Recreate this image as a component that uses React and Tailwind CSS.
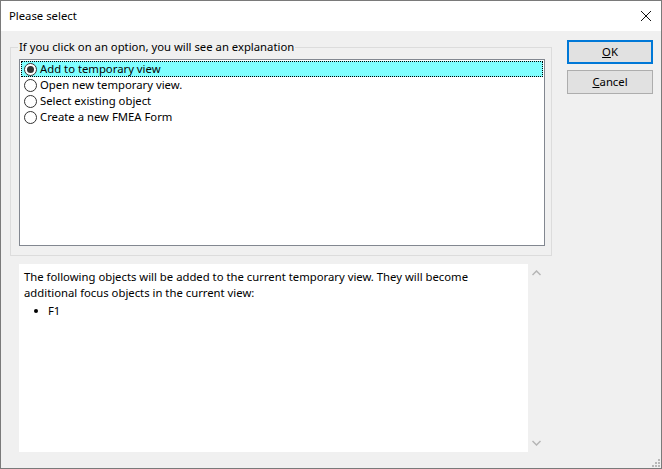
import React, { useState } from 'react';

const options = [
  'Add to temporary view',
  'Open new temporary view.',
  'Select existing object',
  'Create a new FMEA Form',
];

function Radio({ checked }) {
  return (
    <span className="w-[13px] h-[13px] rounded-full border border-[#333] bg-white flex items-center justify-center shrink-0">
      {checked && <span className="w-[7px] h-[7px] rounded-full bg-[#333]" />}
    </span>
  );
}

export default function App() {
  const [selected, setSelected] = useState(0);

  return (
    <div
      className="w-[662px] h-[469px] border border-[#7a7a7a] flex flex-col bg-[#f0f0f0] text-[11.3px] text-black overflow-hidden"
      style={{ fontFamily: '"Segoe UI", "Noto Sans", "Open Sans", sans-serif' }}
    >
      {/* title bar */}
      <div className="h-[30px] bg-white flex items-center justify-between pl-[8px] pr-[8px] shrink-0">
        <span className="leading-none">Please select</span>
        <svg width="12" height="12" viewBox="0 0 12 12" className="mr-[1px]">
          <path d="M1 1 L11 11 M11 1 L1 11" stroke="#111" strokeWidth="1" />
        </svg>
      </div>

      <div className="flex-1 flex">
        {/* left column */}
        <div className="w-[551px] flex flex-col pl-[9px] pt-[9px]">
          <fieldset className="border border-[#dcdcdc] h-[216px] px-[8px] pb-[8px] pt-0 m-0">
            <legend className="px-[1px] ml-[-1px] leading-[14px]">If you click on an option, you will see an explanation</legend>
            <div className="h-[187px] mt-[5px] mr-[-2px] border border-[#828790] bg-white p-[1px]">
              {options.map((o, i) => (
                <div
                  key={o}
                  onClick={() => setSelected(i)}
                  className={
                    'h-[16px] flex items-center gap-[3px] pl-[3px] ' +
                    (i === selected ? 'bg-[#80ffff] outline outline-1 outline-dotted outline-[#000] -outline-offset-1' : '')
                  }
                >
                  <Radio checked={i === selected} />
                  <span className="leading-none">{o}</span>
                </div>
              ))}
            </div>
          </fieldset>

          <div className="flex mt-[8px] ml-[9px] h-[188px]">
            <div className="w-[509px] bg-white pl-[5px] pt-[5px] leading-[16px]">
              <p>
                The following objects will be added to the current temporary view. They will become
                <br />
                additional focus objects in the current view:
              </p>
              <ul className="mt-[2px] pl-[10px]">
                <li className="flex items-center gap-[10px]">
                  <span className="w-[4px] h-[4px] rounded-full bg-black shrink-0" />
                  <span>F1</span>
                </li>
              </ul>
            </div>
            <div className="w-[17px] flex flex-col items-center justify-between py-[6px]">
              <svg width="9" height="6" viewBox="0 0 9 6">
                <path d="M0.5 5 L4.5 1 L8.5 5" stroke="#b5b5b5" strokeWidth="1.5" fill="none" />
              </svg>
              <svg width="9" height="6" viewBox="0 0 9 6">
                <path d="M0.5 1 L4.5 5 L8.5 1" stroke="#b5b5b5" strokeWidth="1.5" fill="none" />
              </svg>
            </div>
          </div>
        </div>

        {/* buttons */}
        <div className="flex flex-col gap-[6px] pl-[15px] pt-[9px]">
          <button className="w-[86px] h-[24px] border-2 border-[#0078d7] bg-[#e1e1e1] flex items-center justify-center">
            <span><u>O</u>K</span>
          </button>
          <button className="w-[86px] h-[24px] border border-[#adadad] bg-[#e1e1e1] flex items-center justify-center">
            <span><u>C</u>ancel</span>
          </button>
        </div>
      </div>

      {/* resize grip */}
      <div className="relative h-0">
        <svg width="10" height="10" viewBox="0 0 10 10" className="absolute right-[1px] bottom-[1px]">
          {[[8, 2], [8, 5], [5, 5], [8, 8], [5, 8], [2, 8]].map(([x, y]) => (
            <rect key={x + '-' + y} x={x} y={y} width="2" height="2" fill="#b8b8b8" />
          ))}
        </svg>
      </div>
    </div>
  );
}
